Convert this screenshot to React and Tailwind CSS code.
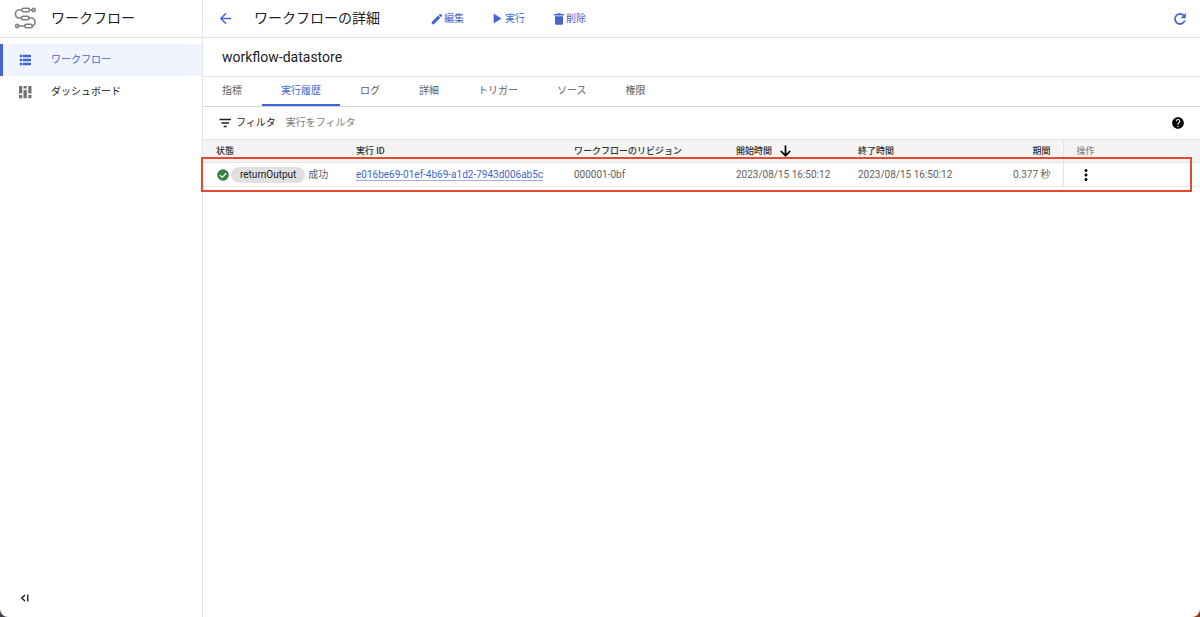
import { MdArrowBack, MdEdit, MdHelp, MdMoreVert, MdPlayArrow } from 'react-icons/md'

const tabs = ['指標', '実行履歴', 'ログ', '詳細', 'トリガー', 'ソース', '権限']

const executions = [
  {
    step: 'returnOutput',
    state: '成功',
    id: 'e016be69-01ef-4b69-a1d2-7943d006ab5c',
    revision: '000001-0bf',
    start: '2023/08/15 16:50:12',
    end: '2023/08/15 16:50:12',
    duration: '0.377 秒',
  },
]

/* Product logo: three linked nodes on an S-shaped line */
function WorkflowsLogo() {
  return (
    <svg className="w-6 h-6" viewBox="0 0 24 24" fill="none" stroke="#808080" strokeWidth="1.6">
      <path d="M18 4H15.500M7.500 4H5A3.500 3.500 0 0 0 1.500 7.500v1A3.500 3.500 0 0 0 5 12h2.500M15 12h2.500A3.500 3.500 0 0 1 21 15.500v1a3.500 3.500 0 0 1-3.500 3.500M11.500 20H5" />
      <rect x="8" y="2.300" width="7.500" height="3.400" rx="1.500" />
      <rect x="7.500" y="10.300" width="7.500" height="3.400" rx="1.500" />
      <rect x="10.800" y="18.300" width="7.500" height="3.400" rx="1.500" />
      <circle cx="19.600" cy="4" r="1.600" />
      <circle cx="3.200" cy="20" r="1.600" />
    </svg>
  )
}

function ListIcon() {
  return (
    <svg className="w-3 h-3" viewBox="0 0 12 12" fill="currentColor">
      <path d="M1 1h2v2H1zM4 1h8v2H4zM1 5h2v2H1zM4 5h8v2H4zM1 9h2v2H1zM4 9h8v2H4z" stroke="currentColor" strokeWidth=".5" />
    </svg>
  )
}

function DashboardIcon() {
  return (
    <svg className="w-3.5 h-3.5" viewBox="0 0 14 14" fill="currentColor">
      <path d="M1 1h3.300v7.500H1zM1 10h3.300v3.300H1zM5.500 1h3.300v2.500H5.500zM5.500 5h3.300v8.300H5.500zM10.200 1h3.300v7.500h-3.300zM10.200 10h3.300v3.300h-3.300z" />
    </svg>
  )
}

function TrashIcon() {
  return (
    <svg className="w-3 h-3" viewBox="0 0 12 12" fill="currentColor">
      <path d="M1 1h3l.7-.8h2.600L8 1h3v1.400H1zM2 3.200h8v7.300a1.300 1.300 0 0 1-1.300 1.300H3.300A1.300 1.300 0 0 1 2 10.500z" />
    </svg>
  )
}

function RefreshIcon() {
  return (
    <svg className="w-4 h-4" viewBox="0 0 16 16" fill="none">
      <path d="M12.300 5.300A5 5 0 1 0 12.800 9.500" stroke="currentColor" strokeWidth="1.700" />
      <path d="M13.800 2v5.300H8.500z" fill="currentColor" />
    </svg>
  )
}

function FilterIcon() {
  return (
    <svg className="w-3.5 h-3.5" viewBox="0 0 14 14" fill="none" stroke="currentColor" strokeWidth="1.500">
      <path d="M1.500 3.500h11.500M3.500 7h7.500M5.700 10.500h3" />
    </svg>
  )
}

function SortDownIcon() {
  return (
    <svg className="w-3.5 h-3.5" viewBox="0 0 14 14" fill="none" stroke="#000" strokeWidth="1.700">
      <path d="M7.500 1.500v10M2.800 7l4.700 4.700L12.200 7" />
    </svg>
  )
}

function SuccessIcon() {
  return (
    <svg className="w-3 h-3 shrink-0" viewBox="0 0 12 12">
      <circle cx="6" cy="6" r="5.800" fill="#388143" />
      <path d="M3 6.200l2.200 2.200L9.200 4.200" fill="none" stroke="#fff" strokeWidth="1.300" />
    </svg>
  )
}

function Sidebar() {
  return (
    <aside className="w-[203px] shrink-0 flex flex-col border-r border-[#e4e4e4]">
      <div className="h-[38px] flex items-center gap-[13px] pl-3.5 pb-0.5 border-b border-[#e4e4e4]">
        <WorkflowsLogo />
        <h2 className="text-sm leading-5">ワークフロー</h2>
      </div>
      <nav className="pt-1.5 text-[10px] leading-4">
        <a href="#workflows" className="h-8 flex items-center gap-5 pl-4 border-l-[3px] border-[#4267d2] bg-[#eff4fe] text-[#4267d2]">
          <ListIcon />
          ワークフロー
        </a>
        <a href="#dashboard" className="h-8 flex items-center gap-[19px] pl-[18px]">
          <span className="text-[#757575]"><DashboardIcon /></span>
          ダッシュボード
        </a>
      </nav>
      <button type="button" aria-label="メニューを閉じる" className="mt-auto mb-3.5 ml-5 self-start">
        <svg className="w-2.5 h-2.5" viewBox="0 0 10 10" fill="none" stroke="#111" strokeWidth="1.300">
          <path d="M5 2L1.700 5 5 8M7.800 1.500v7" />
        </svg>
      </button>
    </aside>
  )
}

function Toolbar() {
  return (
    <header className="h-[38px] flex items-center pl-3.5 pr-3 border-b border-[#e4e4e4] text-[#4267d2]">
      <button type="button" aria-label="戻る"><MdArrowBack className="w-[17px] h-[17px]" /></button>
      <h1 className="ml-5 pb-0.5 text-sm leading-5 text-[#202124]">ワークフローの詳細</h1>
      <div className="ml-[50px] flex items-center gap-7 text-[10px] leading-4">
        <button type="button" className="flex items-center"><MdEdit className="w-3.5 h-3.5" />編集</button>
        <button type="button" className="flex items-center"><MdPlayArrow className="w-[17px] h-[17px] -ml-1" />実行</button>
        <button type="button" className="flex items-center gap-px"><TrashIcon />削除</button>
      </div>
      <button type="button" aria-label="更新" className="ml-auto"><RefreshIcon /></button>
    </header>
  )
}

function ExecutionTable() {
  return (
    <div className="relative">
      <table className="w-full table-fixed text-left text-[10px] leading-4 text-[#616161]">
        <colgroup>
          <col className="w-[140px]" />
          <col className="w-[218px]" />
          <col className="w-[162px]" />
          <col className="w-[122px]" />
          <col className="w-[122px]" />
          <col className="w-24" />
          <col />
        </colgroup>
        <thead className="bg-[#f4f4f4] text-[#303030] text-[9px]">
          <tr className="h-[23px] border-y border-[#e4e4e4] *:font-medium *:pl-[13px] *:py-0">
            <th>状態</th>
            <th>実行 ID</th>
            <th>ワークフローのリビジョン</th>
            <th>
              <button type="button" className="flex items-center gap-1.5">
                開始時間
                <SortDownIcon />
              </button>
            </th>
            <th>終了時間</th>
            <th className="pr-3 text-right">期間</th>
            <th className="border-l border-[#e4e4e4] text-[#8a8a8a]">操作</th>
          </tr>
        </thead>
        <tbody>
          {executions.map((row) => (
            <tr key={row.id} className="h-6 border-b border-[#ebebeb] *:pl-[13px] *:py-0 whitespace-nowrap">
              <td>
                <div className="flex items-center gap-0.5 pl-px">
                  <SuccessIcon />
                  <span className="mr-px px-[9px] rounded-full bg-[#e0e0e0] text-[#202124]">{row.step}</span>
                  {row.state}
                </div>
              </td>
              <td>
                <a href="#execution" className="border-b border-[#9db1e8] text-[#4267d2]">{row.id}</a>
              </td>
              <td>{row.revision}</td>
              <td>{row.start}</td>
              <td>{row.end}</td>
              <td className="pr-3 text-right">{row.duration}</td>
              <td className="border-l border-[#e4e4e4]">
                <button type="button" aria-label="操作メニュー" className="block text-black">
                  <MdMoreVert className="w-[18px] h-[18px]" />
                </button>
              </td>
            </tr>
          ))}
        </tbody>
      </table>
      {/* Highlight around the latest execution */}
      <div className="absolute -left-0.5 right-2 top-[18px] h-[35px] border-2 border-[#e8492e] pointer-events-none" />
    </div>
  )
}

function App() {
  return (
    <div className="bg-linear-to-r from-[#3c4048] from-50% to-[#8a3a1c] to-50%">
      <div className="min-h-screen flex bg-white rounded-b-lg text-[#202124] font-[Roboto,'Noto_Sans_CJK_JP',sans-serif]">
        <Sidebar />
        <main className="flex-1 min-w-0">
          <Toolbar />
          <div className="h-[39px] flex items-center pl-[19px] border-b border-[#e4e4e4]">
            <h2 className="text-sm leading-5">workflow-datastore</h2>
          </div>
          <nav className="h-[30px] flex gap-px border-b border-[#d6d6d6] text-[10px] leading-4 text-[#616161]">
            {tabs.map((tab, i) => (
              <a
                key={tab}
                href={`#tab-${i}`}
                className={i === 1
                  ? 'flex items-center px-[19px] border-b-2 border-[#4267d2] text-[#4267d2]'
                  : 'flex items-center px-[19px] border-b-2 border-transparent'}
              >
                {tab}
              </a>
            ))}
          </nav>
          <div className="h-8 flex items-center px-[15px] text-[10px] leading-4">
            <FilterIcon />
            <label htmlFor="filter" className="ml-1">フィルタ</label>
            <input
              id="filter"
              type="text"
              placeholder="実行をフィルタ"
              className="ml-2.5 flex-1 min-w-0 outline-none placeholder:text-[#808080]"
            />
            <button type="button" aria-label="ヘルプ"><MdHelp className="w-3.5 h-3.5 text-black" /></button>
          </div>
          <ExecutionTable />
        </main>
      </div>
    </div>
  )
}

export default App
